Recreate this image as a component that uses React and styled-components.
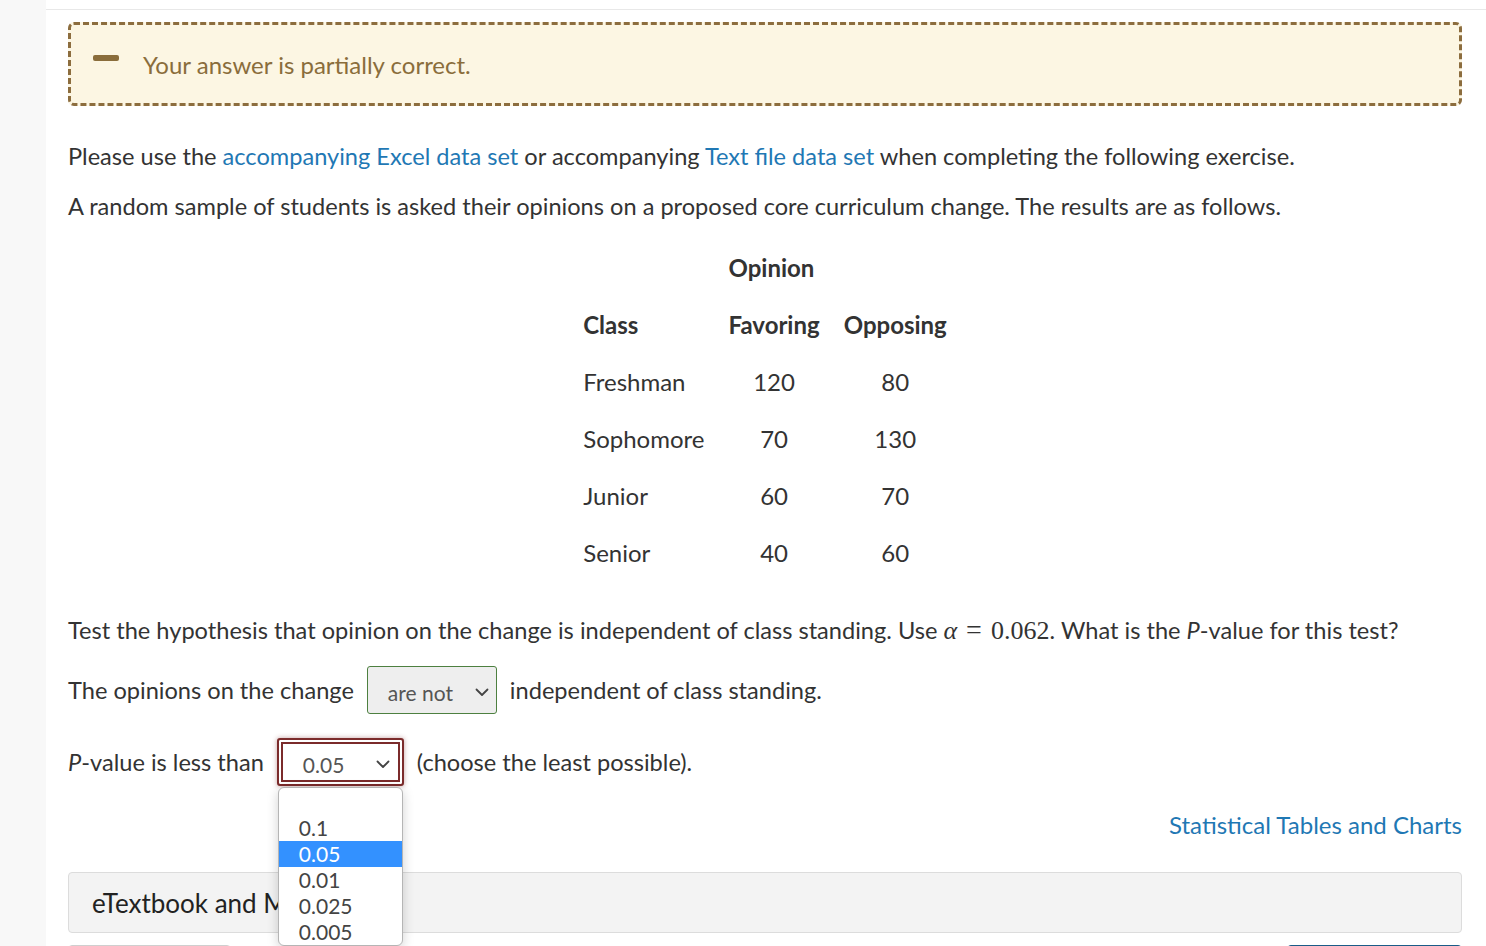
import React from "react";
import styled, { createGlobalStyle } from "styled-components";

const GlobalStyle = createGlobalStyle`
  html, body {
    margin: 0;
    padding: 0;
    background: #fff;
  }
  body {
    font-family: Lato, "Noto Sans", sans-serif;
    color: #333;
    overflow: hidden;
  }
`;

const Page = styled.div`
  display: flex;
  min-height: 100vh;
`;

const Sidebar = styled.div`
  width: 46px;
  flex-shrink: 0;
  background: #f8f8f8;
`;

const Main = styled.div`
  flex: 1;
  padding-top: 9px;
`;

const Content = styled.div`
  border-top: 1px solid #e8e8e8;
  padding: 12px 24px 0 22px;
`;

const Alert = styled.div`
  display: flex;
  align-items: center;
  height: 84px;
  box-sizing: border-box;
  padding-left: 22px;
  border: 3px dashed #8c6d3e;
  border-radius: 6px;
  background: #fcf6e3;
  color: #8a6d3b;
  font-size: 24px;
`;

const MinusIcon = styled.span`
  display: inline-block;
  width: 26px;
  height: 6px;
  border-radius: 2px;
  background: #8a6d3b;
  margin-right: 24px;
  margin-top: -12px;
`;

const Paragraph = styled.p`
  margin: ${(p) => p.$top || 0}px 0 0;
  font-size: 23.6px;
  line-height: 32px;
`;

const Link = styled.a`
  color: #1f78b4;
  text-decoration: none;
`;

const DataTable = styled.table`
  margin: 17px auto 0;
  border-collapse: collapse;
  font-size: 24px;
`;

const Th = styled.th`
  text-align: left;
  font-weight: 700;
  height: 57px;
  padding: 0 12px;
`;

const Td = styled.td`
  text-align: ${(p) => (p.$left ? "left" : "center")};
  height: 57px;
  padding: 0 12px;
`;

const Math = styled.span`
  font-family: "Liberation Serif", "DejaVu Serif", serif;
  font-size: 26px;
`;

const MathVar = styled.i`
  font-family: "Liberation Serif", "DejaVu Serif", serif;
`;

const Eq = styled.span`
  margin: 0 9px;
  font-size: 28px;
`;

const Row = styled.div`
  display: flex;
  align-items: center;
  gap: 13px;
  margin-top: ${(p) => p.$top || 0}px;
  font-size: 23.6px;
  height: 48px;
`;

const SelectWrap = styled.div`
  position: relative;
`;

const FakeSelect = styled.div`
  display: flex;
  align-items: center;
  justify-content: space-between;
  box-sizing: border-box;
  width: ${(p) => p.$width}px;
  height: 48px;
  padding-top: 4px;
  font-size: 21px;
  color: #555;
  border-radius: 3px;
  background: ${(p) => (p.$focused ? "#fff" : "#eee")};
  border: ${(p) => (p.$focused ? "2px solid #7b2b2b" : "1px solid #4d8040")};
  box-shadow: ${(p) =>
    p.$focused
      ? "inset 0 0 0 2px #fff, inset 0 0 0 4px #7b2b2b, 0 0 5px rgba(123,43,43,0.45)"
      : "none"};
  padding-left: ${(p) => (p.$focused ? 24 : 20)}px;
  padding-right: ${(p) => (p.$focused ? 12 : 7)}px;
`;

const Chevron = () => (
  <svg width="14" height="9" viewBox="0 0 14 9" fill="none">
    <path d="M1.5 1.5 L7 7 L12.5 1.5" stroke="#444" strokeWidth="1.8" strokeLinecap="round" strokeLinejoin="round" />
  </svg>
);

const OptionList = styled.div`
  position: absolute;
  top: 49px;
  left: 1px;
  width: 125px;
  box-sizing: border-box;
  padding-top: 1px;
  border: 1px solid #b5b5b5;
  border-radius: 6px;
  background: #fff;
  box-shadow: 0 3px 12px rgba(0, 0, 0, 0.18);
  overflow: hidden;
  z-index: 5;
`;

const Option = styled.div`
  height: 26px;
  line-height: 26px;
  padding-left: 20px;
  font-size: 21px;
  color: ${(p) => (p.$selected ? "#fff" : "#444")};
  background: ${(p) => (p.$selected ? "#3391ff" : "transparent")};
`;

const ToolsLine = styled.div`
  display: flex;
  justify-content: flex-end;
  margin-top: 23px;
  font-size: 24px;
  line-height: 32px;
`;

const MediaPanel = styled.div`
  display: flex;
  align-items: center;
  box-sizing: border-box;
  height: 61px;
  margin-top: 31px;
  padding-left: 23px;
  background: #f3f3f3;
  border: 1px solid #dcdcdc;
  border-radius: 4px;
  font-size: 26px;
  color: #222;
`;

const ButtonBar = styled.div`
  display: flex;
  justify-content: space-between;
  margin-top: 12px;
`;

const Button = styled.button`
  width: ${(p) => p.$width}px;
  height: 44px;
  border-radius: 4px;
  border: 1px solid ${(p) => (p.$primary ? "#1b5c88" : "#cfcfcf")};
  background: ${(p) => (p.$primary ? "#1b5c88" : "#fff")};
`;

const options = ["", "0.1", "0.05", "0.01", "0.025", "0.005"];

const rows = [
  ["Freshman", 120, 80],
  ["Sophomore", 70, 130],
  ["Junior", 60, 70],
  ["Senior", 40, 60],
];

export default function App() {
  return (
    <Page>
      <GlobalStyle />
      <Sidebar />
      <Main>
        <Content>
          <Alert>
            <MinusIcon />
            Your answer is partially correct.
          </Alert>

          <Paragraph $top={34}>
            Please use the <Link>accompanying Excel data set</Link> or accompanying{" "}
            <Link>Text file data set</Link> when completing the following exercise.
          </Paragraph>
          <Paragraph $top={18}>
            A random sample of students is asked their opinions on a proposed core curriculum change. The results are as follows.
          </Paragraph>

          <DataTable>
            <thead>
              <tr>
                <Th />
                <Th colSpan={2}>Opinion</Th>
              </tr>
              <tr>
                <Th>Class</Th>
                <Th>Favoring</Th>
                <Th>Opposing</Th>
              </tr>
            </thead>
            <tbody>
              {rows.map(([name, fav, opp]) => (
                <tr key={name}>
                  <Td $left>{name}</Td>
                  <Td>{fav}</Td>
                  <Td>{opp}</Td>
                </tr>
              ))}
            </tbody>
          </DataTable>

          <Paragraph $top={33}>
            Test the hypothesis that opinion on the change is independent of class standing. Use{" "}
            <Math>
              <MathVar>α</MathVar>
              <Eq>=</Eq>0.062
            </Math>
            . What is the <i>P</i>-value for this test?
          </Paragraph>

          <Row $top={19}>
            <span>The opinions on the change</span>
            <FakeSelect $width={130}>
              are not
              <Chevron />
            </FakeSelect>
            <span>independent of class standing.</span>
          </Row>

          <Row $top={24}>
            <span>
              <i>P</i>-value is less than
            </span>
            <SelectWrap>
              <FakeSelect $width={127} $focused>
                0.05
                <Chevron />
              </FakeSelect>
              <OptionList>
                {options.map((o, i) => (
                  <Option key={i} $selected={o === "0.05"}>
                    {o || "\u00a0"}
                  </Option>
                ))}
              </OptionList>
            </SelectWrap>
            <span>(choose the least possible).</span>
          </Row>

          <ToolsLine>
            <Link>Statistical Tables and Charts</Link>
          </ToolsLine>

          <MediaPanel>eTextbook and Media</MediaPanel>

          <ButtonBar>
            <Button $width={163} />
            <Button $width={175} $primary />
          </ButtonBar>
        </Content>
      </Main>
    </Page>
  );
}
